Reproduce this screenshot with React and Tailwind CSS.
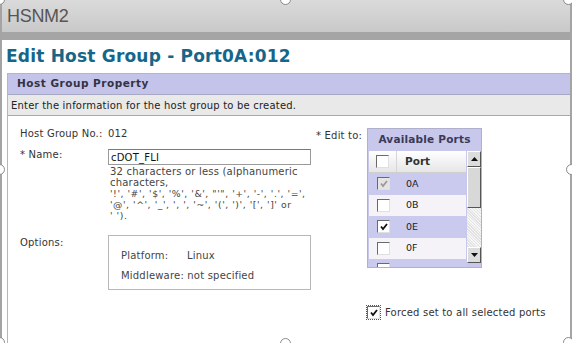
import React from 'react';

const verdana = { fontFamily: '"DejaVu Sans", Verdana, sans-serif' };

const Check = ({ color = '#111' }) => (
  <svg width="10" height="10" viewBox="0 0 10 10" className="absolute left-[1px] top-[1px]">
    <path d="M2 4.5 L4 7 L8 2" fill="none" stroke={color} strokeWidth="1.8" />
  </svg>
);

const Box = ({ checked, disabled }) => (
  <div
    className={`relative w-[13px] h-[13px] border border-t-[#6a6a6a] border-l-[#6a6a6a] border-r-[#e0e0e0] border-b-[#e0e0e0] ${
      disabled ? 'bg-[#e4e4e4]' : 'bg-white'
    }`}
  >
    {checked && <Check color={disabled ? '#9a9a9a' : '#111'} />}
  </div>
);

const Handle = ({ className }) => (
  <div className={`absolute w-[11px] h-[11px] rounded-full bg-white border border-[#8a8a8a] ${className}`} />
);

const ports = [
  { name: '0A', checked: true, disabled: true, bg: 'bg-[#cacaee]' },
  { name: '0B', checked: false, bg: 'bg-[#f5f3f8]' },
  { name: '0E', checked: true, bg: 'bg-[#cacaee]' },
  { name: '0F', checked: false, bg: 'bg-[#f5f3f8]' },
  { name: '', checked: false, bg: 'bg-[#cacaee]' },
];

export default function App() {
  return (
    <div className="relative w-[572px] h-[343px] overflow-hidden bg-white" style={verdana}>
      <div className="h-full border-l-2 border-r-2 border-[#a4a4a4] rounded-tl-[6px]">
        {/* top bar */}
        <div className="h-[32px] bg-gradient-to-b from-[#dadada] to-[#c9c9c9] flex items-center pl-[5px]">
          <span className="text-[18px] text-[#565656] tracking-[-0.3px]" style={{ fontFamily: '"Liberation Sans", Arial, sans-serif' }}>
            HSNM2
          </span>
        </div>
        <div className="h-[8px] bg-[#a5a5a5]" />

        {/* title */}
        <div className="h-[33px] pl-[4px] pt-[5px]">
          <h1 className="text-[17px] font-bold text-[#16668a] leading-[22px] tracking-[0.2px]">Edit Host Group - Port0A:012</h1>
        </div>

        {/* panel */}
        <div className="ml-[5px] border-l border-t border-[#b4b4c8] h-full">
          <div className="h-[21px] bg-[#c4c4ea] border-b border-[#a9a9c4] flex items-center pl-[9px]">
            <span className="text-[10.5px] font-bold text-[#333344] tracking-[0.5px]">Host Group Property</span>
          </div>
          <div className="h-[21px] bg-[#e9e9e9] border-b border-[#a8a8a8] flex items-center pl-[3px]">
            <span className="text-[10px] tracking-[0.2px] text-[#222]">Enter the information for the host group to be created.</span>
          </div>

          <div className="flex pl-[12px] pt-[12px]">
            {/* left column */}
            <div className="w-[296px] text-[10px] tracking-[0.2px] text-[#333]">
              <div className="flex h-[11px] leading-[11px]">
                <span className="w-[88px]">Host Group No.:</span>
                <span>012</span>
              </div>

              <div className="flex mt-[10px]">
                <span className="w-[88px] leading-[11px]">* Name:</span>
                <div className="w-[203px]">
                  <div className="h-[16px] border border-[#9a9a9a] border-t-[#7a7a7a] flex items-center pl-[2px] text-[#111]">
                    cDOT_FLI
                  </div>
                  <div className="leading-[11px] pt-[1px] pl-[2px] text-[#444]">
                    <div>32 characters or less (alphanumeric</div>
                    <div>characters,</div>
                    <div className="text-[9.3px] tracking-[0.55px]">'!', '#', '$', '%', '&amp;', "'", '+', '-', '.', '=',</div>
                    <div className="text-[9.3px] tracking-[0.55px]">'@', '^', '_', '{', '}', '~', '(', ')', '[', ']' or</div>
                    <div className="text-[9.3px] tracking-[0.55px]">' ').</div>
                  </div>
                </div>
              </div>

              <div className="flex mt-[14px]">
                <span className="w-[88px] leading-[11px] pt-[2px]">Options:</span>
                <div className="w-[203px] h-[55px] border border-[#b8b8b8] pl-[12px] pt-[14px] leading-[11px] text-[#444]">
                  <div className="flex">
                    <span className="w-[66px]">Platform:</span>
                    <span>Linux</span>
                  </div>
                  <div className="mt-[9px]">Middleware: not specified</div>
                </div>
              </div>
            </div>

            {/* right column */}
            <div className="flex flex-col">
              <div className="flex">
                <span className="text-[10px] tracking-[0.2px] text-[#333] w-[51px] pt-[2px] leading-[11px]">* Edit to:</span>
                <div className="w-[115px] h-[140px] bg-[#c8c8ec] border border-[#b0b0cc] overflow-hidden">
                  <div className="h-[21px] flex items-center justify-center">
                    <span className="text-[10.5px] font-bold text-[#3a3a58] tracking-[0.2px]">Available Ports</span>
                  </div>
                  <div className="flex ml-[1px] mt-[1px]">
                    <div className="w-[97px]">
                      <div className="h-[22px] flex items-center bg-gradient-to-b from-white to-[#e6e6e6] border-b border-[#cfcfcf]">
                        <div className="w-[28px] flex justify-center border-r border-[#d6d6d6] h-full items-center">
                          <Box />
                        </div>
                        <span className="pl-[8px] text-[10.5px] font-bold text-[#333]">Port</span>
                      </div>
                      {ports.map((p, i) => (
                        <div key={i} className={`h-[21.5px] flex items-center ${p.bg}`}>
                          <div className="w-[28px] flex justify-center">
                            <Box checked={p.checked} disabled={p.disabled} />
                          </div>
                          <span className="pl-[9px] text-[9.5px] text-[#222]">{p.name}</span>
                        </div>
                      ))}
                    </div>
                    {/* scrollbar */}
                    <div className="w-[14px] h-[112px] ml-[1px] flex flex-col bg-[repeating-linear-gradient(45deg,#e2e2e2_0px,#e2e2e2_1px,#f6f6f6_1px,#f6f6f6_2px)]">
                      <div className="h-[16px] bg-[#dcdcdc] border border-t-white border-l-white border-r-[#555] border-b-[#555] flex items-center justify-center">
                        <svg width="7" height="4" viewBox="0 0 7 4"><path d="M0 4 L3.5 0 L7 4 Z" fill="#111" /></svg>
                      </div>
                      <div className="h-[41px] bg-[#d8d8d8] border border-t-white border-l-white border-r-[#555] border-b-[#555]" />
                      <div className="flex-1" />
                      <div className="h-[16px] bg-[#dcdcdc] border border-t-white border-l-white border-r-[#555] border-b-[#555] flex items-center justify-center">
                        <svg width="7" height="4" viewBox="0 0 7 4"><path d="M0 0 L3.5 4 L7 0 Z" fill="#111" /></svg>
                      </div>
                    </div>
                  </div>
                </div>
              </div>

              <div className="flex items-center mt-[37px] ml-[51px]">
                <div className="outline outline-1 outline-dotted outline-[#555]">
                  <Box checked />
                </div>
                <span className="ml-[5px] text-[10px] tracking-[0.2px] text-[#333]">Forced set to all selected ports</span>
              </div>
            </div>
          </div>
        </div>
      </div>

      {/* resize handles */}
      <Handle className="left-[-6px] top-[-6px]" />
      <Handle className="left-[280px] top-[-6px]" />
      <Handle className="left-[563px] top-[-6px]" />
      <Handle className="left-[-6px] top-[164px]" />
      <Handle className="left-[566px] top-[164px]" />
      <Handle className="left-[-6px] top-[337px]" />
      <Handle className="left-[280px] top-[338px]" />
      <Handle className="left-[563px] top-[337px]" />
    </div>
  );
}
